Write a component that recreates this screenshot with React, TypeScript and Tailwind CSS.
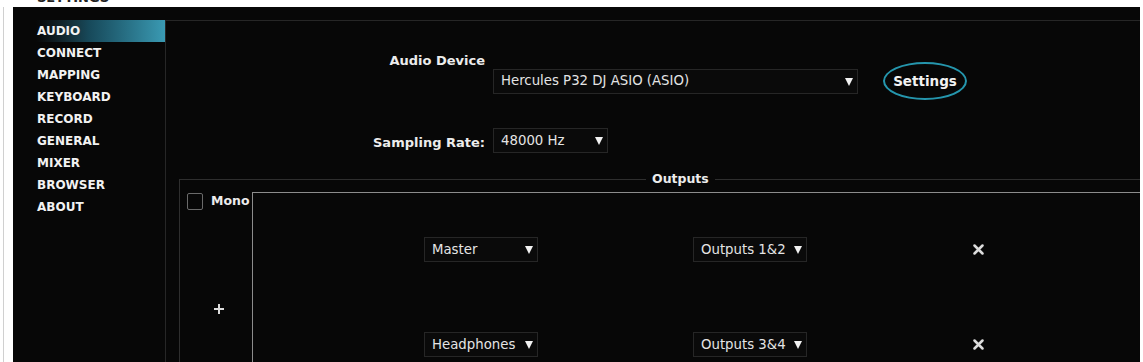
import React from "react";

const menu = ["AUDIO", "CONNECT", "MAPPING", "KEYBOARD", "RECORD", "GENERAL", "MIXER", "BROWSER", "ABOUT"];

function Arrow() {
  return (
    <svg width="8" height="9" viewBox="0 0 8 9" className="shrink-0">
      <path d="M0 1h8L4 9z" fill="#f2f2f2" />
    </svg>
  );
}

function Dropdown({ value, className }: { value: string; className: string }) {
  return (
    <div
      className={`flex items-center justify-between h-[25px] pl-[7px] pr-[4px] bg-[#0a0a0a] border border-[#262626] text-[13.3px] text-[#e4e4e4] ${className}`}
    >
      <span className="whitespace-nowrap">{value}</span>
      <Arrow />
    </div>
  );
}

function Cross() {
  return (
    <svg width="11" height="11" viewBox="0 0 11 11">
      <path d="M1.5 1.5l8 8M9.5 1.5l-8 8" stroke="#dcdcdc" strokeWidth="2.5" strokeLinecap="round" />
    </svg>
  );
}

function OutputRow({ channel, output }: { channel: string; output: string }) {
  return (
    <div className="flex items-center h-[25px]">
      <Dropdown value={channel} className="w-[114px] ml-[171px]" />
      <Dropdown value={output} className="w-[114px] ml-[155px]" />
      <div className="ml-[166px]">
        <Cross />
      </div>
    </div>
  );
}

export default function App() {
  return (
    <div className="w-[1143px] h-[362px] bg-white overflow-hidden font-['DejaVu_Sans',sans-serif]">
      <div className="h-[7px] overflow-hidden pl-[37px]">
        <div className="-mt-[9px] text-[13px] font-bold text-[#222] leading-[14px]">SETTINGS</div>
      </div>
      <div className="flex">
        <div className="w-[13px] shrink-0 flex">
          <div className="ml-[3px] w-px h-[355px] bg-[#d0d0d0]" />
        </div>
        <div className="w-[1127px] h-[355px] bg-[#070707] flex overflow-hidden">
          {/* sidebar */}
          <div className="w-[152px] shrink-0 pt-[13px]">
            {menu.map((m, i) => (
              <div
                key={m}
                className={`h-[22px] flex items-center pl-[24px] text-[12px] font-bold text-[#f2f2f2] ${
                  i === 0 ? "bg-linear-to-r from-[#070707] from-15% via-[#17495a] to-[#3a9ab3]" : ""
                }`}
              >
                {m}
              </div>
            ))}
          </div>

          {/* main */}
          <div className="flex-1 mt-[13px] border-l border-t border-[#262626] overflow-hidden">
            <div className="flex items-start mt-[33px]">
              <div className="w-[319px] text-right text-[13px] font-bold text-[#ececec] leading-[14px]">
                Audio Device
              </div>
              <div className="ml-[8px] mt-[8px] flex items-center">
                <Dropdown value="Hercules P32 DJ ASIO (ASIO)" className="w-[365px]" />
                <div className="ml-[25px] w-[84px] h-[38px] rounded-[50%] border-[2.5px] border-[#2596ad] flex items-center justify-center text-[13.5px] font-bold text-[#f2f2f2]">
                  Settings
                </div>
              </div>
            </div>

            <div className="flex items-center mt-[28px]">
              <div className="w-[319px] text-right text-[13px] font-bold text-[#ececec] pt-[4px]">
                Sampling Rate:
              </div>
              <Dropdown value="48000 Hz" className="w-[115px] ml-[8px]" />
            </div>

            <fieldset className="ml-[13px] mt-[19px] w-[1100px] h-[300px] border border-[#2e2e2e] px-0 pb-0">
              <legend className="ml-[466px] px-[6px] text-[12.5px] font-bold text-[#ececec] leading-[14px]">
                Outputs
              </legend>
              <div className="flex mt-[6px] h-full">
                <div className="w-[72px] shrink-0">
                  <div className="flex items-center pl-[7px]">
                    <div className="w-[16px] h-[17px] rounded-[2px] border border-[#6a6a6a]" />
                    <span className="ml-[8px] text-[12.5px] font-bold text-[#ececec]">Mono</span>
                  </div>
                  <div className="mt-[92px] pl-[33px]">
                    <svg width="12" height="12" viewBox="0 0 12 12">
                      <path d="M6 1v10M1 6h10" stroke="#dcdcdc" strokeWidth="2" />
                    </svg>
                  </div>
                </div>
                <div className="flex-1 border-l border-t border-[#8c8c8c] pt-[44px]">
                  <OutputRow channel="Master" output="Outputs 1&2" />
                  <div className="h-[70px]" />
                  <OutputRow channel="Headphones" output="Outputs 3&4" />
                </div>
              </div>
            </fieldset>
          </div>
        </div>
      </div>
    </div>
  );
}
